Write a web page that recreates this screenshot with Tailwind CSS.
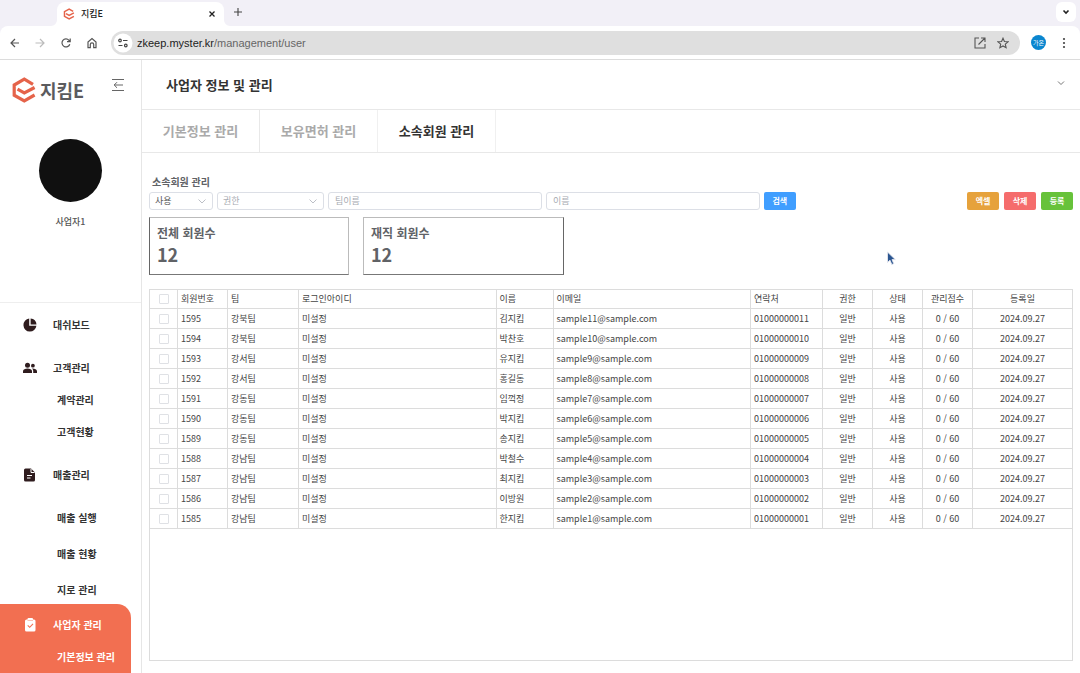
<!DOCTYPE html>
<html lang="ko">
<head>
<meta charset="utf-8">
<title>지킴E</title>
<script src="https://cdn.jsdelivr.net/npm/@tailwindcss/browser@4"></script>
</head>
<body class="flex min-h-screen flex-col bg-white font-['Noto_Sans_CJK_KR',sans-serif] text-[#333]">

<!-- Browser chrome -->
<header class="border-b border-[#dcdcdc] bg-[#f2f0f7]">
  <div class="flex h-[26px] items-end">
    <svg class="ml-[51px] size-1.5" viewBox="0 0 6 6"><path d="M6 0v6H0a6 6 0 0 0 6-6z" fill="#fff"/></svg>
    <div class="flex h-6 w-[167px] items-center rounded-t-lg bg-white px-1.5">
      <svg class="size-3" viewBox="0 0 24 26" fill="none" stroke="#e5634a" stroke-width="3.200"><path d="M21 7.300 12.300 2.200 2.200 8v10.200l10.100 5.600L22.600 18M5.500 12.200l6.800 3.700L22.600 10.500"/></svg>
      <span class="ml-1.5 flex-1 text-[9px] leading-3 font-medium text-[#222]">지킴E</span>
      <button aria-label="탭 닫기" class="flex size-3 items-center justify-center"><svg class="size-2" viewBox="0 0 8 8" stroke="#222" stroke-width="1.300"><path d="M1.500 1.500l5 5M6.500 1.500l-5 5"/></svg></button>
    </div>
    <svg class="size-1.5" viewBox="0 0 6 6"><path d="M0 0v6h6a6 6 0 0 1-6-6z" fill="#fff"/></svg>
    <button aria-label="새 탭" class="flex h-7 w-4 items-center justify-center"><svg class="size-2" viewBox="0 0 8 8" stroke="#444" stroke-width="1.100"><path d="M4 0v8M0 4h8"/></svg></button>
    <button aria-label="탭 검색" class="mr-1 mb-1 ml-auto flex size-5 items-center justify-center rounded-md bg-white"><svg class="size-2" viewBox="0 0 8 8" fill="none" stroke="#222" stroke-width="1.600"><path d="M1.500 2.500 4 5l2.500-2.500"/></svg></button>
  </div>
  <div class="flex h-[33px] items-center rounded-t-lg bg-white pr-2 pl-[7px]">
    <div class="flex gap-3">
      <button aria-label="뒤로"><svg class="size-3.5" viewBox="0 0 14 14" fill="none" stroke="#555" stroke-width="1.200"><path d="M12 7H4M8 3 4 7l4 4"/></svg></button>
      <button aria-label="앞으로"><svg class="size-3.5" viewBox="0 0 14 14" fill="none" stroke="#bbb" stroke-width="1.200"><path d="M2.500 7H11M7 3l4 4-4 4"/></svg></button>
      <button aria-label="새로고침"><svg class="size-3.5" viewBox="0 0 14 14" fill="none" stroke="#555" stroke-width="1.200"><path d="M10.800 8.200A4 4 0 1 1 10 4.300L11 5.500M11.200 2.500v3.200H8"/></svg></button>
      <button aria-label="홈"><svg class="size-3.5" viewBox="0 0 14 14" fill="none" stroke="#555" stroke-width="1.200"><path d="M3 6 7 2.600 11 6v5.700H8.700V8.500a1.700 1.700 0 0 0-3.400 0v3.200H3z"/></svg></button>
    </div>
    <div class="ml-3 flex h-6 flex-1 items-center rounded-full bg-[#dfdfdf] pr-[11px] pl-0.5">
      <svg class="size-5" viewBox="0 0 20 20" fill="none" stroke="#444" stroke-width="1.200"><circle cx="10" cy="10" r="9.500" fill="#fff" stroke="none"/><circle cx="7" cy="7.500" r="1.300"/><path d="M10 7.500h4.500M5.500 12.500h4"/><circle cx="12.800" cy="12.500" r="1.300"/></svg>
      <span class="ml-1 flex-1 font-['Liberation_Sans',sans-serif] text-[11px] leading-4 text-[#666]"><span class="text-[#222]">zkeep.myster.kr</span>/management/user</span>
      <button aria-label="새 창에서 열기"><svg class="size-3" viewBox="0 0 12 12" fill="none" stroke="#555" stroke-width="1.100"><path d="M5 1H1v10h10V7M7 1h4v4M11 1 4.500 7.500"/></svg></button>
      <button aria-label="북마크" class="ml-[11px]"><svg class="size-3" viewBox="0 0 12 12" fill="none" stroke="#555" stroke-width="1.100"><path d="m6 1.200 1.400 3.300 3.600.3-2.700 2.400.8 3.500L6 8.900l-3.100 1.800.8-3.500L1 4.800l3.600-.3z"/></svg></button>
    </div>
    <button class="ml-[11px] size-[15px] rounded-full bg-[#0a86cf] text-center text-[6px] leading-[14px] text-white">가온</button>
    <button aria-label="메뉴" class="ml-2.5 flex w-4 justify-center"><svg class="h-3 w-1" viewBox="0 0 4 12" fill="#444"><circle cx="2" cy="2" r="1.100"/><circle cx="2" cy="6" r="1.100"/><circle cx="2" cy="10" r="1.100"/></svg></button>
  </div>
</header>

<div class="flex flex-1">
  <!-- Sidebar -->
  <aside class="flex w-[142px] shrink-0 flex-col border-r border-[#e6e6e6]">
    <div class="flex h-[242px] flex-col">
      <div class="mt-4 flex h-7 items-center pr-[17px] pl-3">
        <svg class="h-[26px] w-6" viewBox="0 0 24 26" fill="none" stroke="#e5634a" stroke-width="3.200"><path d="M21 7.300 12.300 2.200 2.200 8v10.200l10.100 5.600L22.600 18M5.500 12.200l6.800 3.700L22.600 10.500"/></svg>
        <span class="ml-1 text-[18px] leading-6 font-bold text-[#5b5b5e]">지킴E</span>
        <button aria-label="메뉴 접기" class="mb-2.5 ml-auto"><svg class="size-3" viewBox="0 0 12 12" fill="none" stroke="#666" stroke-width="1"><path d="M0 .5h12M0 11.500h12M11 6H2M5 3.200 2.200 6 5 8.800"/></svg></button>
      </div>
      <div class="mt-[35px] ml-[39px] size-[63px] rounded-full bg-[#101010]"></div>
      <p class="mt-3 text-center text-[9px] leading-4 font-medium text-[#555]">사업자1</p>
    </div>
    <nav class="flex flex-1 flex-col border-t border-[#eee] pt-1.5 text-[10px] leading-4 font-bold">
      <a href="#" class="flex h-8 items-center pl-[22px]">
        <svg class="size-4" viewBox="0 0 16 16" fill="#2f1c1e"><path d="M7.200 1.600A6.500 6.500 0 1 0 14.400 8.800H7.200z"/><path d="M8.600 1.500v5.900h5.900A6.500 6.500 0 0 0 8.600 1.500z"/></svg>
        <span class="ml-[15px]">대쉬보드</span></a>
      <a href="#" class="mt-[11px] flex h-8 items-center pl-[22px]">
        <svg class="size-4" viewBox="0 0 16 16" fill="#2f1c1e"><circle cx="5.500" cy="5.200" r="2.500"/><path d="M1 13v-1.700C1 9.500 3.300 8.600 5.500 8.600S10 9.500 10 11.300V13z"/><circle cx="10.900" cy="5.700" r="1.900"/><path d="M11.200 13v-1.900c0-1.100-.5-1.900-1.200-2.500 2.300-.2 5 .8 5 2.700V13z"/></svg>
        <span class="ml-[15px]">고객관리</span></a>
      <a href="#" class="flex h-8 items-center pl-[57px]">계약관리</a>
      <a href="#" class="flex h-8 items-center pl-[57px]">고객현황</a>
      <a href="#" class="mt-[11px] flex h-8 items-center pl-[22px]">
        <svg class="size-4" viewBox="0 0 16 16"><path d="M3.500 1.500H9l4 4v7.500a1.500 1.500 0 0 1-1.500 1.500h-8A1.500 1.500 0 0 1 2 13V3a1.500 1.500 0 0 1 1.500-1.500z" fill="#2f1c1e"/><path d="M9 2v3.500h3.500M5 8.500h5M5 11h3.500" fill="none" stroke="#fff"/></svg>
        <span class="ml-[15px]">매출관리</span></a>
      <div class="mt-[13px] flex flex-col gap-2 pl-[57px]">
        <a href="#" class="flex h-7 items-center">매출 실행</a>
        <a href="#" class="flex h-7 items-center">매출 현황</a>
        <a href="#" class="flex h-7 items-center">지로 관리</a>
      </div>
      <div class="mr-[10px] flex-1 rounded-tr-[14px] bg-[#f26f51] pt-[5px] text-white">
        <a href="#" class="flex h-8 items-center pl-[22px]">
          <svg class="size-4" viewBox="0 0 16 16"><rect x="3" y="2.500" width="10.500" height="12" rx="1.500" fill="#fff"/><rect x="5.500" y="1" width="5.500" height="3" rx="1" fill="#fff"/><path d="M5.500 3.500h5.500" stroke="#f7b3a2" stroke-width=".8"/><path d="m5.700 8.300 2 2 3.300-3.500" fill="none" stroke="#f26f51" stroke-width="1.100"/></svg>
          <span class="ml-[15px]">사업자 관리</span></a>
        <a href="#" class="flex h-8 items-center pl-[57px]">기본정보 관리</a>
      </div>
    </nav>
  </aside>

  <main class="flex min-w-0 flex-1 flex-col">
    <div class="flex h-[50px] items-center justify-between border-b border-[#e8e8e8] pr-[15px] pl-6">
      <h1 class="text-[13px] leading-5 font-bold">사업자 정보 및 관리</h1>
      <button aria-label="펼치기"><svg class="mb-1 size-2" viewBox="0 0 8 8" fill="none" stroke="#666" stroke-width=".9"><path d="M1 2.500 4 5.500l3-3"/></svg></button>
    </div>
    <div class="flex h-[43px] border-b border-[#e8e8e8] text-[13px] leading-5 font-bold text-[#aaa]">
      <button class="w-[118px] border-r border-[#e8e8e8]">기본정보 관리</button>
      <button class="w-[118px] border-r border-[#f0f0f0]">보유면허 관리</button>
      <button class="w-[118px] border-r border-[#f0f0f0] text-[#333]">소속회원 관리</button>
    </div>

    <section class="flex flex-1 flex-col px-[7px] pb-3">
      <h2 class="mt-5 mb-px pl-[3px] text-[10px] leading-[18px] font-bold text-[#606266]">소속회원 관리</h2>
      <form class="flex h-[18px] items-stretch justify-between text-[9px] leading-4">
        <div class="flex w-[70%] gap-1">
          <div class="relative w-[64px]">
            <select aria-label="상태" class="block h-[18px] w-full appearance-none rounded-[3px] border border-[#dcdfe6] pl-[5px] text-[#555]"><option>사용</option></select>
            <svg class="pointer-events-none absolute top-1 right-1.5 size-2.5" viewBox="0 0 10 10" fill="none" stroke="#b4b8bf" stroke-width=".9"><path d="m1.500 3.500 3.500 3.500 3.500-3.500"/></svg>
          </div>
          <div class="relative w-[107px]">
            <select aria-label="권한" class="block h-[18px] w-full appearance-none rounded-[3px] border border-[#dcdfe6] pl-[5px] text-[#a8abb2]"><option>권한</option></select>
            <svg class="pointer-events-none absolute top-1 right-1.5 size-2.5" viewBox="0 0 10 10" fill="none" stroke="#b4b8bf" stroke-width=".9"><path d="m1.500 3.500 3.500 3.500 3.500-3.500"/></svg>
          </div>
          <input type="text" aria-label="팀이름" placeholder="팀이름" class="min-w-0 flex-1 rounded-[3px] border border-[#dcdfe6] px-1.5 placeholder:text-[#a8abb2]">
          <input type="text" aria-label="이름" placeholder="이름" class="min-w-0 flex-1 rounded-[3px] border border-[#dcdfe6] px-1.5 placeholder:text-[#a8abb2]">
          <button type="button" class="w-8 rounded-[2px] bg-[#409eff] text-[8px] font-bold text-white">검색</button>
        </div>
        <div class="flex gap-[5px] text-[8px] font-bold text-white">
          <button type="button" class="w-8 rounded-[2px] bg-[#e6a23c]">엑셀</button>
          <button type="button" class="w-8 rounded-[2px] bg-[#f56c6c]">삭제</button>
          <button type="button" class="w-8 rounded-[2px] bg-[#67c23a]">등록</button>
        </div>
      </form>

      <div class="mt-[7px] flex gap-3.5 text-[#606266]">
        <div class="h-[58px] w-[200px] border border-t-[#bbb] border-r-[#bbb] border-b-[#777] border-l-[#666] px-[7px] pt-[7px]">
          <p class="text-[12px] leading-4 font-bold">전체 회원수</p>
          <p class="text-[18px] leading-[26px] font-bold">12</p>
        </div>
        <div class="h-[58px] w-[201px] border border-t-[#bbb] border-r-[#666] border-b-[#777] border-l-[#bbb] px-[7px] pt-[7px]">
          <p class="text-[12px] leading-4 font-bold">재직 회원수</p>
          <p class="text-[18px] leading-[26px] font-bold">12</p>
        </div>
      </div>

      <div class="mt-3.5 flex-1 border border-[#dcdcdc]">
        <table class="w-full table-fixed border-separate border-spacing-0 text-left text-[9px] leading-4 text-[#444]">
          <colgroup><col class="w-[28px]"><col class="w-[50px]"><col class="w-[71px]"><col><col class="w-[57px]"><col><col class="w-[72px]"><col class="w-[50px]"><col class="w-[50px]"><col class="w-[50px]"><col class="w-[99px]"></colgroup>
          <thead>
            <tr class="h-[19px] *:border-r *:border-b *:border-[#dcdcdc] *:px-[3px] *:py-0 *:font-normal">
              <th><input type="checkbox" aria-label="전체 선택" class="mx-auto block size-[10px] appearance-none rounded-[1px] border border-[#dfe1e5]"></th>
              <th>회원번호</th><th>팀</th><th>로그인아이디</th><th>이름</th><th>이메일</th><th>연락처</th>
              <th class="text-center">권한</th><th class="text-center">상태</th><th class="text-center">관리점수</th><th class="border-r-0! text-center">등록일</th>
            </tr>
          </thead>
          <tbody id="rows"></tbody>
        </table>
      </div>
    </section>
  </main>
</div>

<svg class="pointer-events-none absolute top-[251px] left-[886px] h-[15px] w-[11px]" viewBox="0 0 11 15"><path d="M1.500 1v10.500l2.500-2.300 1.800 4.300 2-.8L6 8.600h3.300z" fill="#2b5590" stroke="#e4e6ee" stroke-width=".9"/></svg>

<script>
  const members = [
    ['강북팀', '김지킴'], ['강북팀', '박찬호'], ['강서팀', '유지킴'], ['강서팀', '홍길동'],
    ['강동팀', '임꺽정'], ['강동팀', '박지킴'], ['강동팀', '송지킴'], ['강남팀', '박철수'],
    ['강남팀', '최지킴'], ['강남팀', '이방원'], ['강남팀', '한지킴']
  ];
  document.getElementById('rows').innerHTML = members.map(([team, name], i) => {
    const n = 11 - i, id = 1584 + n;
    return `<tr class="h-5 *:border-r *:border-b *:border-[#dcdcdc] *:px-[3px] *:py-0">
      <td><input type="checkbox" aria-label="${id} 선택" class="mx-auto block size-[10px] appearance-none rounded-[1px] border border-[#dfe1e5]"></td>
      <td>${id}</td><td>${team}</td><td>미설정</td><td>${name}</td><td>sample${n}@sample.com</td><td>010${String(n).padStart(8, '0')}</td>
      <td class="text-center">일반</td><td class="text-center">사용</td><td class="text-center">0 / 60</td><td class="border-r-0! text-center">2024.09.27</td></tr>`;
  }).join('');
</script>
</body>
</html>
